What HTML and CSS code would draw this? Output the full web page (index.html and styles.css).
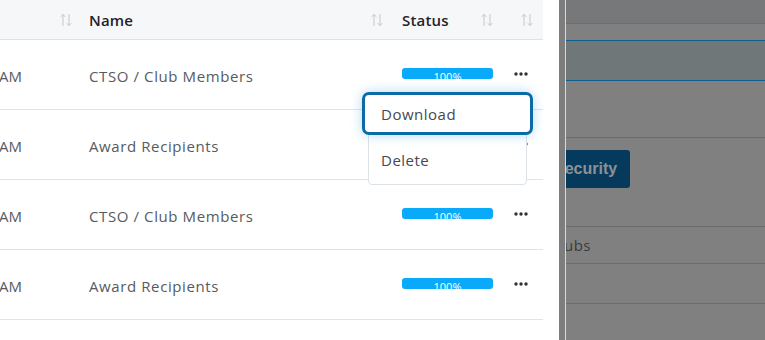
FILE: index.html
```html
<!DOCTYPE html>
<html lang="en">
<head>
<meta charset="utf-8">
<title>Uploads</title>
<link rel="stylesheet" href="styles.css">
</head>
<body>
<div class="screen">
  <section class="table-panel">
    <div class="table">
      <div class="tr thead">
        <div class="th th-date"><svg class="sort" viewBox="0 0 12 14"><path d="M3 13V1.5M0.8 3.8L3 1.3L5.2 3.8M9 1v11.5M6.8 10.2L9 12.7L11.2 10.2"/></svg></div>
        <div class="th"><span class="th-label">Name</span><svg class="sort" viewBox="0 0 12 14"><path d="M3 13V1.5M0.8 3.8L3 1.3L5.2 3.8M9 1v11.5M6.8 10.2L9 12.7L11.2 10.2"/></svg></div>
        <div class="th"><span class="th-label">Status</span><svg class="sort" viewBox="0 0 12 14"><path d="M3 13V1.5M0.8 3.8L3 1.3L5.2 3.8M9 1v11.5M6.8 10.2L9 12.7L11.2 10.2"/></svg></div>
        <div class="th th-actions"><svg class="sort" viewBox="0 0 12 14"><path d="M3 13V1.5M0.8 3.8L3 1.3L5.2 3.8M9 1v11.5M6.8 10.2L9 12.7L11.2 10.2"/></svg></div>
      </div>

      <div class="tr">
        <div class="td td-date"><span class="clip"><span>03/12/2024 10:41 AM</span></span></div>
        <div class="td td-name">CTSO / Club Members</div>
        <div class="td"><div class="progress"><span>100%</span></div></div>
        <div class="td td-actions">
          <svg class="dots" viewBox="0 0 14 4"><circle cx="2" cy="2" r="1.7"/><circle cx="7" cy="2" r="1.7"/><circle cx="12" cy="2" r="1.7"/></svg>
          <div class="menu">
            <div class="menu-item active">Download</div>
            <div class="menu-item">Delete</div>
          </div>
        </div>
      </div>

      <div class="tr">
        <div class="td td-date"><span class="clip"><span>03/12/2024 10:38 AM</span></span></div>
        <div class="td td-name">Award Recipients</div>
        <div class="td"><div class="progress"><span>100%</span></div></div>
        <div class="td td-actions"><svg class="dots" viewBox="0 0 14 4"><circle cx="2" cy="2" r="1.7"/><circle cx="7" cy="2" r="1.7"/><circle cx="12" cy="2" r="1.7"/></svg></div>
      </div>

      <div class="tr">
        <div class="td td-date"><span class="clip"><span>03/11/2024 09:15 AM</span></span></div>
        <div class="td td-name">CTSO / Club Members</div>
        <div class="td"><div class="progress"><span>100%</span></div></div>
        <div class="td td-actions"><svg class="dots" viewBox="0 0 14 4"><circle cx="2" cy="2" r="1.7"/><circle cx="7" cy="2" r="1.7"/><circle cx="12" cy="2" r="1.7"/></svg></div>
      </div>

      <div class="tr">
        <div class="td td-date"><span class="clip"><span>03/11/2024 09:02 AM</span></span></div>
        <div class="td td-name">Award Recipients</div>
        <div class="td"><div class="progress"><span>100%</span></div></div>
        <div class="td td-actions"><svg class="dots" viewBox="0 0 14 4"><circle cx="2" cy="2" r="1.7"/><circle cx="7" cy="2" r="1.7"/><circle cx="12" cy="2" r="1.7"/></svg></div>
      </div>
    </div>
  </section>

  <aside class="backdrop">
    <div class="edge"></div>
    <div class="under">
      <div class="u-head"></div>
      <div class="u-band"></div>
      <div class="u-selected"></div>
      <div class="u-band u-tall"></div>
      <div class="u-section">
        <div class="u-button"><span>Security</span></div>
      </div>
      <div class="u-row"><span class="u-text">Clubs</span></div>
      <div class="u-row u-row-b"></div>
      <div class="u-rest"></div>
    </div>
  </aside>
</div>
</body>
</html>
```

FILE: styles.css
```css
* { box-sizing: border-box; }

html, body {
  margin: 0;
  padding: 0;
  width: 765px;
  height: 340px;
  overflow: hidden;
  background: #ffffff;
  font-family: "Open Sans", "Liberation Sans", sans-serif;
}

.screen {
  display: flex;
  width: 765px;
  height: 340px;
}

/* ---------- table ---------- */
.table-panel {
  width: 559px;
  flex: none;
  background: #ffffff;
}

.table {
  width: 543px;
}

.tr {
  display: grid;
  grid-template-columns: 80px 312px 110px 41px;
  height: 70px;
  border-bottom: 1px solid #dfe4e9;
}

.thead {
  height: 40px;
  background: #f6f7f9;
  border-bottom: 1px solid #dde2e7;
}

.th {
  display: flex;
  align-items: center;
  justify-content: space-between;
  padding: 0 9px 0 9px;
}

.th:nth-child(3) { padding-left: 10px; }
.th-date { justify-content: flex-end; padding-right: 8px; }
.th-actions { justify-content: flex-end; padding-right: 10px; }

.th-label {
  font-size: 15px;
  font-weight: 600;
  color: #1f2328;
  letter-spacing: 0.2px;
}

.sort {
  width: 12px;
  height: 14px;
  fill: none;
  stroke: #c3c8ce;
  stroke-width: 1;
}

.td {
  display: flex;
  align-items: center;
  font-size: 15px;
  color: #565b61;
  padding-left: 10px;
  padding-top: 2px;
}

.td-date { padding-left: 0; }

.clip {
  display: flex;
  justify-content: flex-end;
  width: 22px;
  overflow: hidden;
  white-space: nowrap;
}

.td-name { padding-left: 9px; letter-spacing: 0.6px; }

.progress {
  width: 91px;
  height: 11px;
  border-radius: 3px;
  background: #09aaf9;
  display: flex;
  justify-content: center;
  margin-top: -4px;
}

.progress span {
  font-size: 11px;
  line-height: 17px;
  color: #ffffff;
}

.td-actions {
  position: relative;
  padding-left: 12px;
}

.dots {
  width: 14px;
  height: 4px;
  fill: #2e3238;
  margin-top: -4px;
}

/* dropdown menu */
.menu {
  position: absolute;
  top: 52px;
  right: 16px;
  width: 159px;
  background: #ffffff;
  border: 1px solid #dde2e7;
  border-radius: 4px;
  padding-bottom: 2px;
  z-index: 5;
}

.menu-item {
  height: 44px;
  display: flex;
  align-items: center;
  padding-left: 12px;
  font-size: 15px;
  color: #45494f;
  letter-spacing: 0.5px;
}

.menu-item.active {
  height: 43px;
  margin: -1px -7px 3px -7px;
  padding-left: 16px;
  border: 3px solid #0c6aa6;
  border-radius: 7px;
  background: #ffffff;
  box-shadow: 0 0 12px rgba(40, 150, 220, 0.35);
}

/* ---------- backdrop side ---------- */
.backdrop {
  flex: 1;
  display: flex;
  background: #808080;
  overflow: hidden;
}

.edge {
  width: 7px;
  flex: none;
  background: #7d7d7d;
  border-right: 1px solid #d9d9d9;
}

.under {
  flex: 1;
  display: flex;
  flex-direction: column;
  overflow: hidden;
}

.u-head {
  height: 24px;
  background: #77787a;
  border-bottom: 1px solid #6d6d6e;
}

.u-band {
  height: 16px;
  background: #808080;
}

.u-selected {
  height: 41px;
  background: #6f7778;
  border-top: 1px solid #0d5f90;
  border-bottom: 1px solid #0d5f90;
}

.u-tall {
  height: 57px;
  border-bottom: 1px solid #6c6c6c;
}

.u-section {
  height: 89px;
  padding-top: 12px;
  border-bottom: 1px solid #6c6c6c;
}

.u-button {
  width: 64px;
  height: 38px;
  background: #063a5d;
  border-radius: 0 3px 3px 0;
  overflow: hidden;
  display: flex;
  align-items: center;
}

.u-button span {
  margin-left: -12px;
  font-family: "Liberation Sans", Arial, sans-serif;
  font-weight: 700;
  font-size: 16px;
  color: #8e9194;
  white-space: nowrap;
}

.u-row {
  height: 37px;
  border-bottom: 1px solid #6c6c6c;
  display: flex;
  align-items: center;
}

.u-row-b { height: 40px; }

.u-text {
  margin-left: -16px;
  font-size: 15px;
  color: #3a3b3d;
  white-space: nowrap;
  letter-spacing: 0.4px;
}

.u-rest { flex: 1; }
```
